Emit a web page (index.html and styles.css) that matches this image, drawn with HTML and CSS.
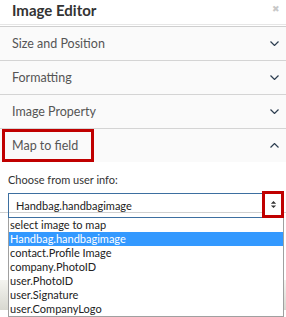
FILE: index.html
```html
<!DOCTYPE html>
<html>
<head>
<meta charset="utf-8">
<link rel="stylesheet" href="styles.css">
</head>
<body>
<div class="panel">
  <div class="header">
    <span class="title">Image Editor</span>
    <span class="close">&#x2716;</span>
  </div>
  <div class="sections">
    <div class="row"><span class="label">Size and Position</span><svg class="chev" viewBox="0 0 9 5" width="9" height="5"><path d="M0.5 0.5 L4.5 4.5 L8.5 0.5" fill="none" stroke="#2d3e50" stroke-width="1.2"/></svg></div>
    <div class="row"><span class="label">Formatting</span><svg class="chev" viewBox="0 0 9 5" width="9" height="5"><path d="M0.5 0.5 L4.5 4.5 L8.5 0.5" fill="none" stroke="#2d3e50" stroke-width="1.2"/></svg></div>
    <div class="row"><span class="label">Image Property</span><svg class="chev" viewBox="0 0 9 5" width="9" height="5"><path d="M0.5 0.5 L4.5 4.5 L8.5 0.5" fill="none" stroke="#2d3e50" stroke-width="1.2"/></svg></div>
    <div class="row open"><span class="label boxed">Map to field</span><svg class="chev" viewBox="0 0 9 5" width="9" height="5"><path d="M0.5 4.5 L4.5 0.5 L8.5 4.5" fill="none" stroke="#2d3e50" stroke-width="1.2"/></svg></div>
    <div class="body">
      <div class="caption">Choose from user info:</div>
      <div class="select-wrap">
        <div class="select">
          <span class="value">Handbag.handbagimage</span>
          <span class="arrow"><svg viewBox="0 0 8 10" width="7" height="9"><path d="M1 4 L4 1 L7 4 Z M1 6 L4 9 L7 6 Z" fill="#333"/></svg></span>
        </div>
        <ul class="list">
          <li>select image to map</li>
          <li class="sel">Handbag.handbagimage</li>
          <li>contact.Profile Image</li>
          <li>company.PhotoID</li>
          <li>user.PhotoID</li>
          <li>user.Signature</li>
          <li>user.CompanyLogo</li>
        </ul>
      </div>
      <div class="behind">
        <div class="behind-line"></div>
        <div class="behind-bottom"><span class="ghost"></span></div>
      </div>
    </div>
  </div>
</div>
</body>
</html>
```
FILE: styles.css
```css
html, body {
  margin: 0;
  padding: 0;
  background: #fff;
}
body {
  width: 286px;
  height: 317px;
  overflow: hidden;
  font-family: Lato, "Open Sans", sans-serif;
}
.panel {
  width: 286px;
}
.header {
  height: 25px;
  border-bottom: 1px solid #e6e6e6;
  display: flex;
  justify-content: space-between;
  align-items: flex-start;
  padding-left: 12px;
  padding-right: 6px;
  box-sizing: border-box;
}
.title {
  font-weight: 700;
  font-size: 15px;
  color: #333;
  line-height: 22px;
  margin-top: -1px;
}
.close {
  font-size: 9px;
  color: #c8c8c8;
  line-height: 12px;
  margin-top: 3px;
}
.sections {
  margin-top: 1px;
  border-top: 1px solid #cfcfcf;
}
.row {
  height: 33px;
  border-bottom: 1px solid #d4d4d4;
  background: #fafafa;
  display: flex;
  align-items: center;
  justify-content: space-between;
  padding: 0 7px 0 12px;
  font-size: 12.5px;
  color: #555;
}
.row.open {
  border-bottom: none;
  padding-left: 2px;
  align-items: stretch;
}
.chev {
  display: block;
  align-self: center;
}
.label {
  line-height: 18px;
}
.boxed {
  border: 3px solid #c00000;
  padding-left: 7px;
  display: flex;
  align-items: center;
  box-sizing: border-box;
  width: 92px;
  height: 33px;
}
.body {
  background: #fff;
  padding: 11px 2px 0 8px;
  position: relative;
}
.caption {
  font-size: 11px;
  color: #333;
  line-height: 14px;
  margin-bottom: 6px;
}
.select-wrap {
  position: relative;
  z-index: 2;
}
.select {
  height: 25px;
  border: 1px solid #3d6fa0;
  box-sizing: border-box;
  display: flex;
  align-items: center;
  justify-content: space-between;
  padding-left: 7px;
  font-size: 11px;
  color: #222;
  position: relative;
}
.arrow {
  position: absolute;
  right: -1px;
  top: -3px;
  width: 22px;
  height: 27px;
  border: 3px solid #c00000;
  box-sizing: border-box;
  display: flex;
  align-items: center;
  justify-content: center;
  background: #fff;
}
.arrow svg {
  display: block;
}
.list {
  position: absolute;
  left: 0;
  right: 0;
  top: 25px;
  margin: 0;
  padding: 0;
  list-style: none;
  border: 1px solid #a0a0a0;
  border-top: none;
  background: #fff;
  font-size: 11px;
  color: #222;
}
.list li {
  height: 14px;
  line-height: 14px;
  padding-left: 1px;
  white-space: nowrap;
}
.list li.sel {
  background: #3399ff;
  color: #fff;
}
.behind {
  position: absolute;
  left: 0;
  right: 0;
  top: 50px;
  height: 140px;
  z-index: 1;
}
.behind-line {
  position: absolute;
  left: 0;
  right: 0;
  top: 0;
  border-top: 1px solid #d0d0d0;
}
.behind-bottom {
  position: absolute;
  left: 0;
  right: 0;
  top: 68px;
  height: 30px;
  background: linear-gradient(#f4f4f0, #d8d8d0);
}
.ghost {
  position: absolute;
  left: 60px;
  top: 14px;
  width: 78px;
  height: 20px;
  border: 1px solid #333;
  background: #fff;
}
```
